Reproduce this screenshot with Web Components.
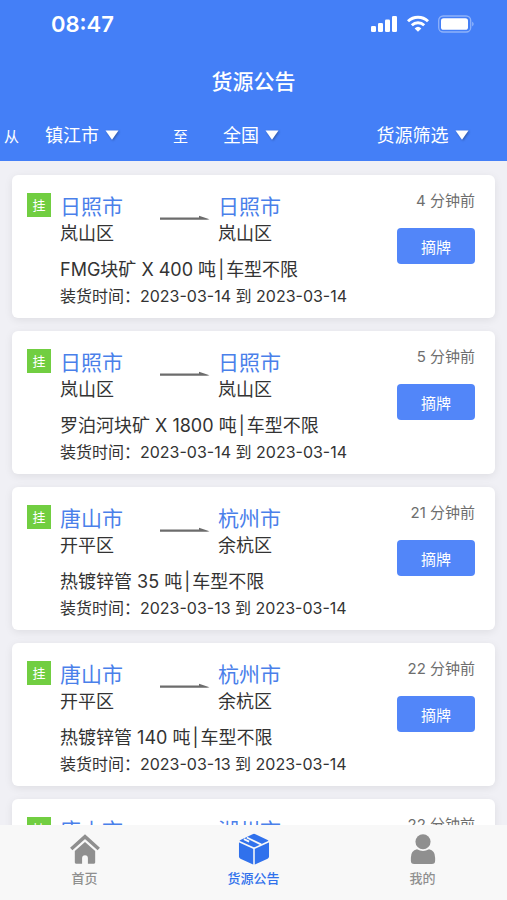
<!DOCTYPE html>
<html lang="zh-CN">
<head>
<meta charset="utf-8">
<meta name="viewport" content="width=device-width, initial-scale=1">
<title>货源公告</title>
<style>
:root {
	--brand: #447ff7;
	--brand-button: #5286f9;
	--brand-text: #4a80ea;
	--brand-tab: #3071ec;
	--text: #333;
	--muted: #6e6e6e;
	--tab: #8f8f8f;
	--badge: #71ce41;
	--page: #f0f0f5;
}
body {
	margin: 0;
	background: var(--page);
	color: var(--text);
	font-family: Inter, "Noto Sans CJK SC", sans-serif;
}
</style>
</head>
<body>
<cargo-app>
	<status-bar slot="header" time="08:47"></status-bar>
	<page-title slot="header">货源公告</page-title>
	<filter-bar slot="header">
		<filter-select label="从" value="镇江市"></filter-select>
		<filter-select label="至" value="全国"></filter-select>
		<filter-select value="货源筛选"></filter-select>
	</filter-bar>

	<cargo-card cargo="FMG块矿 X 400 吨" truck="车型不限">
		<route-stop slot="from" city="日照市" district="岚山区"></route-stop>
		<route-stop slot="to" city="日照市" district="岚山区"></route-stop>
		<span slot="time">装货时间：2023-03-14 到 2023-03-14</span>
		<span slot="age">4 分钟前</span>
	</cargo-card>
	<cargo-card cargo="罗泊河块矿 X 1800 吨" truck="车型不限">
		<route-stop slot="from" city="日照市" district="岚山区"></route-stop>
		<route-stop slot="to" city="日照市" district="岚山区"></route-stop>
		<span slot="time">装货时间：2023-03-14 到 2023-03-14</span>
		<span slot="age">5 分钟前</span>
	</cargo-card>
	<cargo-card cargo="热镀锌管 35 吨" truck="车型不限">
		<route-stop slot="from" city="唐山市" district="开平区"></route-stop>
		<route-stop slot="to" city="杭州市" district="余杭区"></route-stop>
		<span slot="time">装货时间：2023-03-13 到 2023-03-14</span>
		<span slot="age">21 分钟前</span>
	</cargo-card>
	<cargo-card cargo="热镀锌管 140 吨" truck="车型不限">
		<route-stop slot="from" city="唐山市" district="开平区"></route-stop>
		<route-stop slot="to" city="杭州市" district="余杭区"></route-stop>
		<span slot="time">装货时间：2023-03-13 到 2023-03-14</span>
		<span slot="age">22 分钟前</span>
	</cargo-card>
	<cargo-card brief>
		<route-stop slot="from" city="唐山市"></route-stop>
		<route-stop slot="to" city="湖州市"></route-stop>
		<span slot="age">22 分钟前</span>
	</cargo-card>

	<tab-bar slot="footer">
		<tab-item icon="home">首页</tab-item>
		<tab-item icon="box" active>货源公告</tab-item>
		<tab-item icon="user">我的</tab-item>
	</tab-bar>
</cargo-app>

<script>
function makeTemplate(html) {
	const template = document.createElement('template')
	template.innerHTML = html;
	return template;
}

class BaseElement extends HTMLElement {
	constructor() {
		super();
		this.attachShadow({mode: 'open'})
		this.shadowRoot.appendChild(this.constructor.template.content.cloneNode(true));
	}

	// Copies an attribute into the first element that matches the selector
	fill(selector, name) {
		this.shadowRoot.querySelector(selector).textContent = this.getAttribute(name) || '';
	}
}

class CargoApp extends BaseElement {
	static template = makeTemplate(`
<style>
:host {
	display: flex;
	flex-direction: column;
	height: 100vh;
}
header {
	background: var(--brand);
	color: #fff;
}
main {
	flex: 1;
	min-height: 0;
	overflow-y: auto;
	scrollbar-width: none;
}
.list {
	display: flex;
	flex-direction: column;
	gap: 13px;
	padding: 14px 12px;
}
</style>
<header><slot name="header"></slot></header>
<main><div class="list"><slot></slot></div></main>
<slot name="footer"></slot>
`);
}

class StatusBar extends BaseElement {
	static template = makeTemplate(`
<style>
:host {
	display: flex;
	align-items: center;
	justify-content: space-between;
	height: 48px;
	padding: 0 32px 0 51px;
}
time {
	font-size: 22px;
	font-weight: 600;
}
.icons {
	display: flex;
	align-items: center;
	gap: 9px;
}
svg {
	display: block;
}
</style>
<time></time>
<div class="icons">
	<svg width="27" height="18" viewBox="0 0 27 18" fill="#fff">
		<rect x="0" y="11" width="5" height="6" rx="1.3"/>
		<rect x="7" y="8" width="5" height="9" rx="1.3"/>
		<rect x="14" y="4.5" width="5" height="12.5" rx="1.3"/>
		<rect x="21" y="1" width="5" height="16" rx="1.3"/>
	</svg>
	<svg width="22" height="18" viewBox="0 0 22 18" fill="none" stroke="#fff" stroke-width="2.9">
		<path d="M1 6.300a14.500 14.500 0 0 1 20 0"/>
		<path d="M4.800 10.300a9 9 0 0 1 12.400 0"/>
		<path d="M11 16.800 7.600 13.400a5 5 0 0 1 6.800 0z" fill="#fff" stroke="none"/>
	</svg>
	<svg width="37" height="18" viewBox="0 0 37 18">
		<rect x=".7" y="1" width="32" height="16" rx="4.5" fill="none" stroke="#fff" stroke-opacity=".4" stroke-width="1.3"/>
		<rect x="3" y="3.2" width="27" height="11.6" rx="2.6" fill="#fff"/>
		<path d="M34.300 6.500q2.500 2.500 0 5z" fill="#fff" fill-opacity=".5"/>
	</svg>
</div>
`);
	connectedCallback() {
		this.fill('time', 'time');
	}
}

class PageTitle extends BaseElement {
	static template = makeTemplate(`
<style>
:host {
	display: flex;
	align-items: center;
	justify-content: center;
	height: 63px;
}
h1 {
	margin: 0;
	font-size: 21px;
	font-weight: 500;
}
</style>
<h1><slot></slot></h1>
`);
}

class FilterBar extends BaseElement {
	static template = makeTemplate(`
<style>
:host {
	display: grid;
	grid-template-columns: repeat(3, 1fr);
	align-items: center;
	height: 48px;
	padding-bottom: 2px;
}
</style>
<slot></slot>
`);
}

class FilterSelect extends BaseElement {
	static template = makeTemplate(`
<style>
:host {
	display: flex;
	align-items: center;
}
:host([label]) {
	padding: 0 24px 0 4px;
}
label {
	font-size: 15px;
}
label:empty {
	display: none;
}
.field {
	flex: 1;
	display: flex;
	align-items: center;
	justify-content: center;
	gap: 6px;
}
select {
	appearance: none;
	padding: 0;
	border: 0;
	background: none;
	color: inherit;
	font: inherit;
	font-size: 18px;
}
option {
	color: #333;
}
svg {
	filter: drop-shadow(1px 1px 1px rgba(0, 0, 0, .3));
	pointer-events: none;
}
</style>
<label for="choice"></label>
<div class="field">
	<select id="choice"><option></option></select>
	<svg width="14" height="10" viewBox="0 0 14 10" fill="#fff"><path d="M.5 .5h13L7 9.800z"/></svg>
</div>
`);
	connectedCallback() {
		this.fill('label', 'label');
		this.fill('option', 'value');
		if (!this.hasAttribute('label')) {
			this.shadowRoot.querySelector('select').setAttribute('aria-label', this.getAttribute('value'));
		}
	}
}

class RouteStop extends BaseElement {
	static template = makeTemplate(`
<style>
:host {
	display: block;
}
.city {
	color: var(--brand-text);
	font-size: 21px;
	line-height: 28px;
}
.district {
	font-size: 18px;
	line-height: 26px;
}
</style>
<div class="city"></div>
<div class="district"></div>
`);
	connectedCallback() {
		this.fill('.city', 'city');
		this.fill('.district', 'district');
	}
}

class CargoCard extends BaseElement {
	static template = makeTemplate(`
<style>
:host {
	display: flex;
	align-items: flex-start;
	box-sizing: border-box;
	min-height: 143px;
	padding: 18px 20px 10px 15px;
	background: #fff;
	border-radius: 6px;
	box-shadow: 0 2px 8px rgba(0, 0, 0, .08);
}
:host([brief]) .cargo,
:host([brief]) .time,
:host([brief]) button {
	display: none;
}
.badge {
	width: 24px;
	margin-right: 9px;
	background: var(--badge);
	color: #fff;
	font-size: 13px;
	line-height: 24px;
	text-align: center;
}
.info {
	flex: 1;
	white-space: nowrap;
}
.route {
	display: flex;
}
.route svg {
	margin: 22px 8px 0 37px;
}
.cargo {
	margin-top: 9px;
	font-size: 18px;
	line-height: 28px;
}
.divider {
	margin: 0 2px;
}
.time {
	font-size: 16px;
	line-height: 24px;
}
.side {
	display: flex;
	flex-direction: column;
	align-items: flex-end;
	gap: 20px;
}
.age {
	color: var(--muted);
	font-size: 15px;
	line-height: 15px;
}
button {
	width: 78px;
	height: 36px;
	padding: 0;
	border: 0;
	border-radius: 4px;
	background: var(--brand-button);
	color: #fff;
	font: inherit;
	font-size: 15px;
}
</style>
<span class="badge">挂</span>
<div class="info">
	<div class="route">
		<slot name="from"></slot>
		<svg width="50" height="6" viewBox="0 0 50 6" fill="#6c6c6c"><path d="M0 2.500h39V.800L49.500 4.200 47 4.800H0z"/></svg>
		<slot name="to"></slot>
	</div>
	<div class="cargo"><span class="goods"></span><span class="divider">|</span><span class="truck"></span></div>
	<div class="time"><slot name="time"></slot></div>
</div>
<div class="side">
	<div class="age"><slot name="age"></slot></div>
	<button type="button">摘牌</button>
</div>
`);
	connectedCallback() {
		this.fill('.goods', 'cargo');
		this.fill('.truck', 'truck');
	}
}

class TabBar extends BaseElement {
	static template = makeTemplate(`
<style>
:host {
	display: block;
	background: #f8f8f8;
}
nav {
	display: grid;
	grid-template-columns: repeat(3, 1fr);
	height: 75px;
}
</style>
<nav><slot></slot></nav>
`);
}

const tabIcons = {
	home: `
		<path d="M1.800 16.500 16 3.800l14.200 12.700" fill="none" stroke="currentColor" stroke-width="3.6"/>
		<path d="M16 9.200 5.500 18.500V30.500q0 1.200 1.200 1.200H13V26a3 3 0 0 1 6 0v5.700h6.300q1.200 0 1.200-1.200V18.500z"/>`,
	box: `
		<path d="M16 .8q.8 0 1.500.4L30 7.200q1.500.8 1.500 2.500v14.500q0 1.600-1.500 2.400L17.500 32.300q-1.500.7-3 0L2 26.600Q.5 25.800.5 24.200V9.700Q.5 8 2 7.200l12.500-6Q15.200.8 16 .8z"/>
		<path d="M.5 8.800 16 15.800l15.500-7M16 15.800V33" fill="none" stroke="#f8f8f8" stroke-width="1.6"/>
		<path d="M8.600 4.600 23.600 12M5.600 6.400 11 8.900" fill="none" stroke="#f8f8f8" stroke-width="1.9"/>`,
	user: `
		<circle cx="16" cy="9" r="7.8"/>
		<path d="M9.800 16.800q6.200 3.400 12.400 0Q28.500 18 28.500 25.500v3q0 3.400-3.400 3.400H6.900q-3.400 0-3.400-3.400v-3q0-7.500 6.300-8.700z"/>`
}

class TabItem extends BaseElement {
	static template = makeTemplate(`
<style>
:host {
	display: block;
	color: var(--tab);
}
:host([active]) {
	color: var(--brand-tab);
}
a {
	display: flex;
	flex-direction: column;
	align-items: center;
	gap: 3px;
	padding-top: 8px;
	color: inherit;
	font-size: 13px;
	font-weight: 500;
	line-height: 20px;
	text-decoration: none;
}
</style>
<a href="#"><svg width="32" height="32" viewBox="0 0 32 33" fill="currentColor"></svg><span><slot></slot></span></a>
`);
	connectedCallback() {
		this.shadowRoot.querySelector('svg').innerHTML = tabIcons[this.getAttribute('icon')];
		if (this.hasAttribute('active')) this.shadowRoot.querySelector('a').setAttribute('aria-current', 'page');
	}
}

window.customElements.define('cargo-app', CargoApp);
window.customElements.define('status-bar', StatusBar);
window.customElements.define('page-title', PageTitle);
window.customElements.define('filter-bar', FilterBar);
window.customElements.define('filter-select', FilterSelect);
window.customElements.define('route-stop', RouteStop);
window.customElements.define('cargo-card', CargoCard);
window.customElements.define('tab-bar', TabBar);
window.customElements.define('tab-item', TabItem);
</script>
</body>
</html>
